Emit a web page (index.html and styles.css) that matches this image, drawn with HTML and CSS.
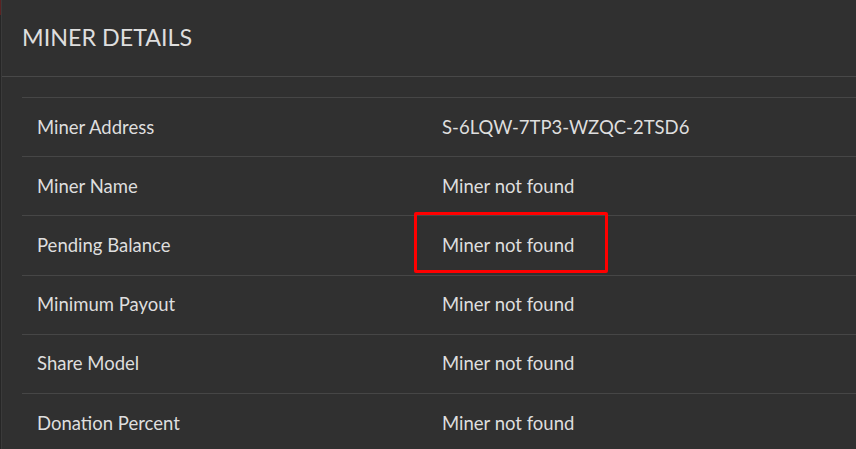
FILE: index.html
```html
<!DOCTYPE html>
<html>
<head>
<meta charset="utf-8">
<link rel="stylesheet" href="styles.css">
</head>
<body>
<div class="edge"></div>
<section class="panel">
  <header class="panel-head">MINER DETAILS</header>
  <div class="panel-body">
    <table class="details">
      <tr><td class="label">Miner Address</td><td class="value">S-6LQW-7TP3-WZQC-2TSD6</td></tr>
      <tr><td class="label">Miner Name</td><td class="value">Miner not found</td></tr>
      <tr><td class="label">Pending Balance</td><td class="value highlight">Miner not found<span class="mark"></span></td></tr>
      <tr><td class="label">Minimum Payout</td><td class="value">Miner not found</td></tr>
      <tr><td class="label">Share Model</td><td class="value">Miner not found</td></tr>
      <tr><td class="label">Donation Percent</td><td class="value">Miner not found</td></tr>
    </table>
  </div>
</section>
</body>
</html>
```
FILE: styles.css
```css
html, body {
  margin: 0;
  padding: 0;
  background: #303030;
  height: 449px;
  overflow: hidden;
}
body {
  display: flex;
  font-family: Lato, "Open Sans", sans-serif;
  color: #dedede;
}
.edge {
  width: 1px;
  background: linear-gradient(#5a2222 0, #5a2222 15px, #262626 15px);
  border-right: 1px solid #3a3a3a;
  flex: none;
}
.panel {
  flex: 1;
  background: #303030;
}
.panel-head {
  height: 77px;
  box-sizing: border-box;
  padding: 24px 0 0 20px;
  font-size: 23.3px;
  line-height: 27px;
  border-bottom: 1px solid #484848;
}
.panel-body {
  padding: 20px 0 0 20px;
}
.details {
  width: 100%;
  border-collapse: collapse;
  font-size: 18.5px;
}
.details td {
  border-top: 1px solid #464646;
  height: 57.2px;
  padding: 0 0 1px 0;
  vertical-align: middle;
}
.label {
  width: 405px;
  padding-left: 15px !important;
}
.highlight {
  position: relative;
}
.mark {
  position: absolute;
  left: -28px;
  top: -4px;
  width: 188px;
  height: 55px;
  border: 3px solid #ff0000;
  border-radius: 2px;
}
```
